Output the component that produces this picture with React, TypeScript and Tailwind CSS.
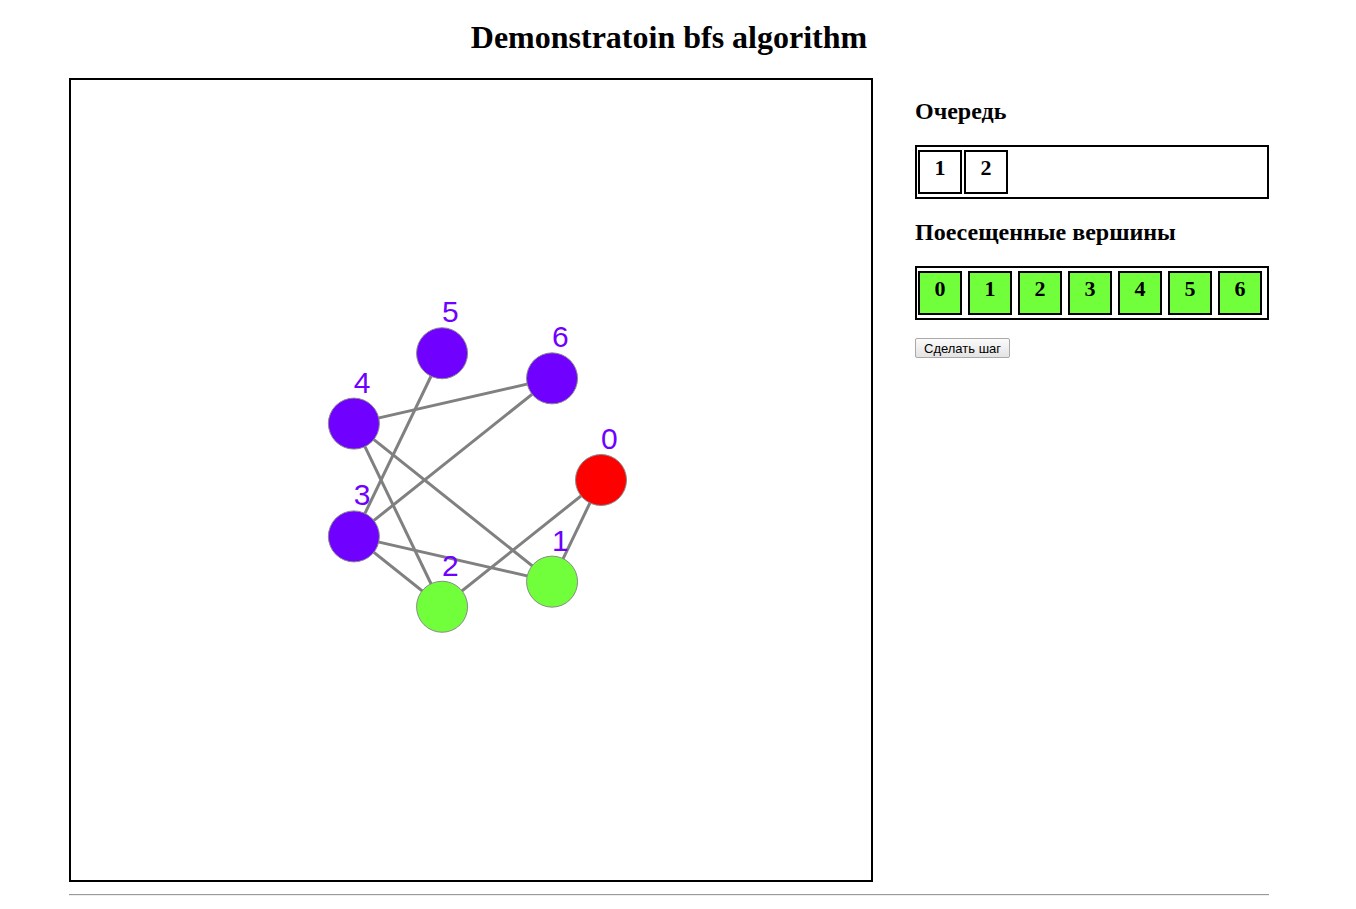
import React from "react";

const PURPLE = "#7000ff";
const GREEN = "#72ff3b";
const RED = "#ff0000";

// вершины лежат на окружности r=130 вокруг центра холста
const NODES = Array.from({ length: 7 }, (_, i) => {
  const a = (2 * Math.PI * i) / 7;
  return { id: i, x: 400 + 130 * Math.cos(a), y: 400 + 130 * Math.sin(a) };
});

const COLORS = [RED, GREEN, GREEN, PURPLE, PURPLE, PURPLE, PURPLE];

const EDGES: [number, number][] = [
  [0, 1],
  [0, 2],
  [3, 1],
  [3, 2],
  [3, 5],
  [3, 6],
  [4, 6],
  [4, 2],
  [4, 1],
];

const QUEUE = [1, 2];
const VISITED = [0, 1, 2, 3, 4, 5, 6];

function Graph() {
  return (
    <svg width={800} height={800} viewBox="0 0 800 800" className="block">
      {EDGES.map(([a, b], i) => (
        <line
          key={i}
          x1={NODES[a].x}
          y1={NODES[a].y}
          x2={NODES[b].x}
          y2={NODES[b].y}
          stroke="#808080"
          strokeWidth={3}
        />
      ))}
      {NODES.map((n) => (
        <g key={n.id}>
          <circle cx={n.x} cy={n.y} r={25.5} fill={COLORS[n.id]} stroke="#8a8a8a" strokeWidth={1} />
          <text
            x={n.x}
            y={n.y - 31}
            fill={PURPLE}
            fontSize={30}
            fontFamily="'Liberation Sans', Arial, sans-serif"
          >
            {n.id}
          </text>
        </g>
      ))}
    </svg>
  );
}

function Cell({ value, filled }: { value: number; filled?: boolean }) {
  return (
    <div
      className={`w-[44px] h-[44px] border-2 border-black text-center text-[22px] font-bold leading-[24px] pt-[4px] ${
        filled ? "bg-[#72ff3b]" : "bg-white"
      }`}
    >
      {value}
    </div>
  );
}

export default function App() {
  return (
    <div className="bg-white min-h-[909px] text-black font-['Liberation_Serif',serif]">
      <div className="ml-[69px] w-[1200px]">
        <h1 className="mt-[19px] text-center text-[32px] font-bold leading-[37px]">
          Demonstratoin bfs algorithm
        </h1>
        <div className="flex mt-[22px]">
          <div className="w-[804px] h-[804px] border-2 border-black">
            <Graph />
          </div>
          <div className="ml-[42px] w-[354px]">
            <h2 className="mt-[19px] text-[24px] font-bold leading-[28px]">Очередь</h2>
            <div className="mt-[20px] border-2 border-black h-[54px] flex gap-[2px] pl-[1px] pt-[3px]">
              {QUEUE.map((q) => (
                <Cell key={q} value={q} />
              ))}
            </div>
            <h2 className="mt-[19px] text-[24px] font-bold leading-[28px]">Поесещенные вершины</h2>
            <div className="mt-[20px] border-2 border-black h-[54px] flex gap-[6px] pl-[1px] pt-[3px]">
              {VISITED.map((v) => (
                <Cell key={v} value={v} filled />
              ))}
            </div>
            <button className="mt-[18px] h-[20px] px-[8px] border border-[#a9a9a9] rounded-[2px] bg-gradient-to-b from-[#fbfbfb] to-[#e3e3e3] text-[13px] leading-[18px] pt-[1px] font-['Liberation_Sans',Arial,sans-serif]">
              Сделать шаг
            </button>
          </div>
        </div>
        <div className="mt-[12px] border-t border-t-[#9a9a9a] border-b border-b-[#eeeeee]" />
      </div>
    </div>
  );
}
